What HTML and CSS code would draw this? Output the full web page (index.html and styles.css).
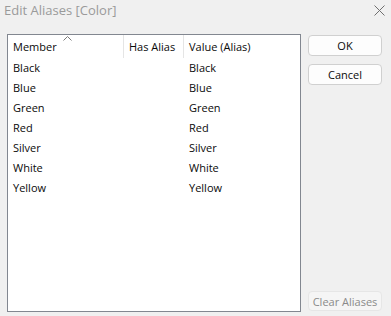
FILE: index.html
```html
<!DOCTYPE html>
<html lang="en">
<head>
    <meta charset="UTF-8">
    <title>Edit Aliases [Color]</title>
    <link rel="stylesheet" href="styles.css">
</head>
<body>
    <div class="titlebar">
        <span class="title">Edit Aliases [Color]</span>
        <svg class="close" width="11" height="11" viewBox="0 0 11 11">
            <path d="M0.5 0.5 L10.5 10.5 M10.5 0.5 L0.5 10.5" stroke="#6f6f6f" stroke-width="1" fill="none"/>
        </svg>
    </div>

    <div class="content">
        <div class="list">
            <div class="list-head">
                <div class="col col-member">Member</div>
                <div class="col col-has">Has Alias</div>
                <div class="col col-value">Value (Alias)</div>
                <svg class="sort" width="9" height="5" viewBox="0 0 9 5">
                    <path d="M0.5 4.5 L4.5 0.5 L8.5 4.5" stroke="#7a7a7a" stroke-width="1" fill="none"/>
                </svg>
            </div>
            <div class="row"><div class="col col-member">Black</div><div class="col col-has"></div><div class="col col-value">Black</div></div>
            <div class="row"><div class="col col-member">Blue</div><div class="col col-has"></div><div class="col col-value">Blue</div></div>
            <div class="row"><div class="col col-member">Green</div><div class="col col-has"></div><div class="col col-value">Green</div></div>
            <div class="row"><div class="col col-member">Red</div><div class="col col-has"></div><div class="col col-value">Red</div></div>
            <div class="row"><div class="col col-member">Silver</div><div class="col col-has"></div><div class="col col-value">Silver</div></div>
            <div class="row"><div class="col col-member">White</div><div class="col col-has"></div><div class="col col-value">White</div></div>
            <div class="row"><div class="col col-member">Yellow</div><div class="col col-has"></div><div class="col col-value">Yellow</div></div>
        </div>

        <div class="actions">
            <button class="btn">OK</button>
            <button class="btn">Cancel</button>
            <button class="btn btn-disabled">Clear Aliases</button>
        </div>
    </div>
</body>
</html>
```

FILE: styles.css
```css
* {
    box-sizing: border-box;
}

body {
    font-family: "Open Sans", "Noto Sans", sans-serif;
    font-size: 11px;
    background-color: #f0f0f0;
    color: #0a0a0a;
    margin: 0;
    width: 391px;
    height: 316px;
    overflow: hidden;
}

.titlebar {
    height: 20px;
    display: flex;
    align-items: center;
    justify-content: space-between;
    padding: 0 6px 0 4px;
}

.title {
    font-size: 13px;
    color: #9a9a9a;
}

.close {
    display: block;
}

.content {
    display: flex;
    padding: 14px 0 0 7px;
}

.list {
    position: relative;
    width: 294px;
    height: 278px;
    background-color: #fff;
    border: 1px solid #828790;
}

.list-head,
.row {
    display: flex;
}

.list-head {
    height: 23px;
}

.list-head .col {
    height: 23px;
    line-height: 23px;
    border-right: 1px solid #e5e5e5;
}

.list-head .col-value {
    border-right: none;
}

.row {
    height: 20px;
    line-height: 20px;
}

.col-member {
    width: 116px;
    padding-left: 5px;
}

.col-has {
    width: 60px;
    padding-left: 5px;
}

.col-value {
    flex: 1;
    padding-left: 5px;
}

.sort {
    position: absolute;
    left: 55px;
    top: 1px;
}

.actions {
    display: flex;
    flex-direction: column;
    gap: 8px;
    margin-left: 7px;
    padding-top: 1px;
    height: 277px;
}

.btn {
    width: 74px;
    height: 21px;
    padding: 0;
    font-family: inherit;
    font-size: 11px;
    color: #0a0a0a;
    background-color: #fdfdfd;
    border: 1px solid #d0d0d0;
    border-radius: 4px;
}

.btn-disabled {
    margin-top: auto;
    height: 20px;
    color: #8a8a8a;
    background-color: #f5f5f5;
    border-color: #e6e6e6;
}
```
